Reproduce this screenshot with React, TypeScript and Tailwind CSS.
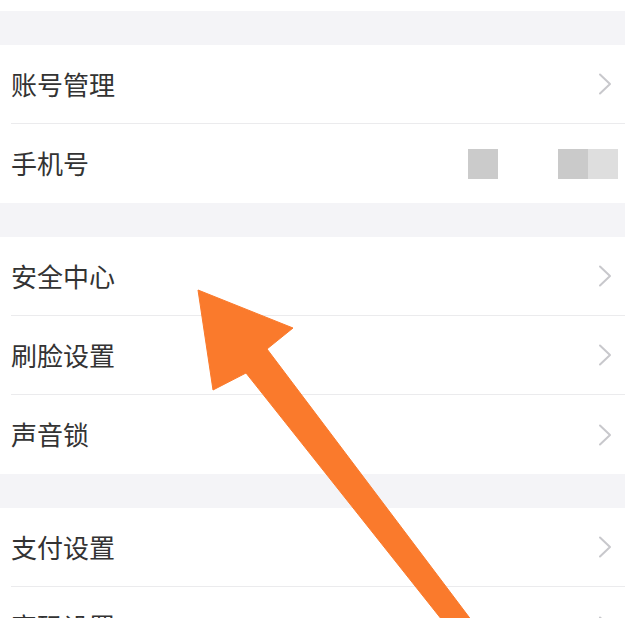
import React from "react";

const Chevron = () => (
  <svg width="16" height="24" viewBox="0 0 16 24" className="shrink-0">
    <path d="M3 2.5 L13 12 L3 21.5" fill="none" stroke="#c8c8cc" strokeWidth="2" strokeLinecap="round" strokeLinejoin="round" />
  </svg>
);

type RowProps = { label: string; last?: boolean; right?: React.ReactNode };

const Row = ({ label, last, right }: RowProps) => (
  <div className="bg-white pl-[11px]">
    <div className={`h-[79px] flex items-center justify-between pr-[12px] ${last ? "" : "border-b border-[#ebebed]"}`}>
      <span className="text-[26px] text-[#333333] leading-none mb-[1px]" style={{ fontFamily: '"Noto Sans CJK SC", "Noto Sans", sans-serif' }}>
        {label}
      </span>
      {right ?? <Chevron />}
    </div>
  </div>
);

const Gap = () => <div className="h-[34px] bg-[#f4f4f7]" />;

export default function App() {
  return (
    <div className="relative w-[625px] h-[618px] overflow-hidden bg-white">
      <div className="h-[11px] bg-white" />
      <Gap />
      <Row label="账号管理" />
      <Row
        label="手机号"
        last
        right={
          <div className="flex items-center gap-[60px] pr-0 mr-[-5px]">
            <div className="w-[30px] h-[30px] bg-[#cbcbcb] blur-[0.5px]" />
            <div className="flex blur-[0.5px]">
              <div className="w-[30px] h-[30px] bg-[#cacaca]" />
              <div className="w-[30px] h-[30px] bg-[#dedede]" />
            </div>
          </div>
        }
      />
      <Gap />
      <Row label="安全中心" />
      <Row label="刷脸设置" />
      <Row label="声音锁" last />
      <Gap />
      <Row label="支付设置" />
      <Row label="密码设置" last />
      <svg className="absolute left-0 top-0 pointer-events-none" width="625" height="618" viewBox="0 0 625 618">
        <polygon
          points="198,290 293,328 267,349 475,625 446,625 246,373 213,390"
          fill="#fa7a2c"
          stroke="#fa7a2c"
          strokeWidth="1"
          strokeLinejoin="round"
        />
      </svg>
    </div>
  );
}
